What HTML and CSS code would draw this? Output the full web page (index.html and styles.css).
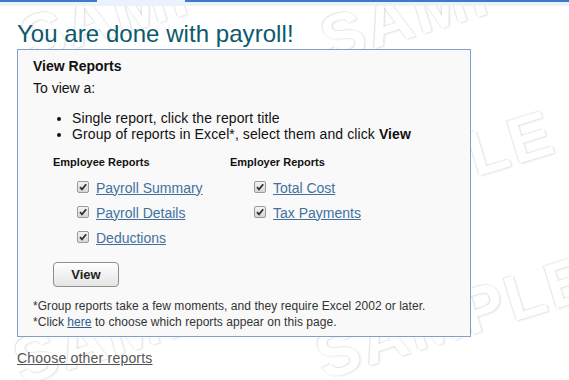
FILE: index.html
```html
<!DOCTYPE html>
<html lang="en">
<head>
<meta charset="utf-8">
<title>Payroll done</title>
<link rel="stylesheet" href="styles.css">
</head>
<body>
<div class="watermark" aria-hidden="true">
  <span class="wm wm1">SAMPLE</span>
  <span class="wm wm2">SAMPLE</span>
  <span class="wm wm3">SAMPLE</span>
  <span class="wm wm4">SAMPLE</span>
  <span class="wm wm5">SAMPLE</span>
</div>

<div class="topbar">
  <span class="seg seg-a"></span>
  <span class="seg seg-gap"></span>
  <span class="seg seg-b"></span>
</div>

<div class="page">
  <h1 class="title">You are done with payroll!</h1>

  <div class="panel">
    <h2 class="panel-title">View Reports</h2>
    <p class="intro">To view a:</p>
    <ul class="steps">
      <li>Single report, click the report title</li>
      <li>Group of reports in Excel*, select them and click <b>View</b></li>
    </ul>

    <div class="groups">
      <div class="group">
        <h3 class="group-title">Employee Reports</h3>
        <div class="row"><span class="cb"><svg viewBox="0 0 12 12" width="12" height="12"><path d="M3 6.2 L5 8.4 L9.2 3.2" fill="none" stroke="#333" stroke-width="1.8"/></svg></span><a class="rlink" href="#">Payroll Summary</a></div>
        <div class="row"><span class="cb"><svg viewBox="0 0 12 12" width="12" height="12"><path d="M3 6.2 L5 8.4 L9.2 3.2" fill="none" stroke="#333" stroke-width="1.8"/></svg></span><a class="rlink" href="#">Payroll Details</a></div>
        <div class="row"><span class="cb"><svg viewBox="0 0 12 12" width="12" height="12"><path d="M3 6.2 L5 8.4 L9.2 3.2" fill="none" stroke="#333" stroke-width="1.8"/></svg></span><a class="rlink" href="#">Deductions</a></div>
      </div>
      <div class="group">
        <h3 class="group-title">Employer Reports</h3>
        <div class="row"><span class="cb"><svg viewBox="0 0 12 12" width="12" height="12"><path d="M3 6.2 L5 8.4 L9.2 3.2" fill="none" stroke="#333" stroke-width="1.8"/></svg></span><a class="rlink" href="#">Total Cost</a></div>
        <div class="row"><span class="cb"><svg viewBox="0 0 12 12" width="12" height="12"><path d="M3 6.2 L5 8.4 L9.2 3.2" fill="none" stroke="#333" stroke-width="1.8"/></svg></span><a class="rlink" href="#">Tax Payments</a></div>
      </div>
    </div>

    <button class="view-btn" type="button">View</button>

    <p class="notes">*Group reports take a few moments, and they require Excel 2002 or later.<br>*Click <a class="here" href="#">here</a> to choose which reports appear on this page.</p>
  </div>

  <a class="other" href="#">Choose other reports</a>
</div>
</body>
</html>
```
FILE: styles.css
```css
html, body {
  margin: 0;
  padding: 0;
  background: #ffffff;
}
body {
  font-family: "Liberation Sans", Arial, sans-serif;
  color: #111;
  width: 569px;
  height: 380px;
  overflow: hidden;
  position: relative;
}

.topbar {
  position: relative;
  z-index: 1;
  display: flex;
  height: 6px;
  background: #eaf3fd;
}
.seg { display: block; height: 0; }
.seg-a { width: 97px; border-top: 2px solid #3b7bcc; }
.seg-gap { width: 88px; }
.seg-b { flex: 1; border-top: 2px solid #3b7bcc; }

.page {
  position: relative;
  z-index: 1;
  padding-left: 17px;
}

.title {
  margin: 14px 0 1px;
  font-size: 24px;
  line-height: 28px;
  font-weight: normal;
  color: #0b5a6d;
  letter-spacing: 0.05px;
}

.panel {
  width: 454px;
  box-sizing: border-box;
  border: 1px solid #819fcb;
  background: #f9f9f9;
  padding: 8px 15px 6px;
}

.panel-title {
  margin: 0;
  font-size: 14px;
  line-height: 16px;
  font-weight: bold;
}

.intro {
  margin: 6px 0 0;
  font-size: 14px;
  line-height: 16px;
}

.steps {
  margin: 14px 0 14px;
  padding-left: 39px;
  font-size: 14px;
  line-height: 16px;
  letter-spacing: 0.1px;
}

.groups {
  display: grid;
  grid-template-columns: 177px 177px;
  padding-left: 20px;
}

.group-title {
  margin: 0 0 6px;
  font-size: 11px;
  line-height: 13px;
  font-weight: bold;
}

.row {
  display: flex;
  align-items: center;
  height: 25px;
  padding-left: 24px;
  font-size: 14px;
}

.cb {
  display: inline-flex;
  width: 12px;
  height: 12px;
  box-sizing: border-box;
  border: 1px solid #9a9a9a;
  border-radius: 2px;
  background: linear-gradient(#f4f4f4, #d6d6d6);
  margin-right: 7px;
  margin-top: -1px;
  overflow: hidden;
}
.cb svg { margin: -1px; }

.rlink {
  color: #42719f;
  text-decoration: underline;
}

.view-btn {
  display: block;
  margin: 12px 0 0 20px;
  width: 66px;
  height: 25px;
  border: 1px solid #8e8e8e;
  border-radius: 4px;
  background: linear-gradient(#ffffff, #e4e4e4);
  font-family: "Liberation Sans", Arial, sans-serif;
  font-size: 13px;
  font-weight: bold;
  color: #222;
  padding: 0;
}

.notes {
  margin: 11px 0 0;
  font-size: 12px;
  line-height: 16px;
  color: #333;
  letter-spacing: 0.05px;
}
.here { color: #2d5e8e; }

.other {
  display: block;
  margin-top: 13px;
  font-size: 14px;
  line-height: 16px;
  color: #555;
  width: max-content;
  letter-spacing: 0.2px;
}

.watermark {
  position: absolute;
  inset: 0;
  z-index: 0;
  pointer-events: none;
  overflow: hidden;
}
.wm {
  position: absolute;
  font-family: "Liberation Sans", Arial, sans-serif;
  font-weight: bold;
  font-size: 64px;
  line-height: 64px;
  color: #ffffff;
  text-shadow: -1px -1px 1px rgba(0,0,0,0.10), 1px 1px 2px rgba(0,0,0,0.13);
  transform: rotate(-17deg);
  transform-origin: left bottom;
  letter-spacing: 3px;
  white-space: nowrap;
}
.wm1 { left: 32px; top: 8px; }
.wm2 { left: 332px; top: 8px; }
.wm3 { left: 290px; top: 180px; }
.wm4 { left: 327px; top: 325px; }
.wm5 { left: 25px; top: 330px; }
```
